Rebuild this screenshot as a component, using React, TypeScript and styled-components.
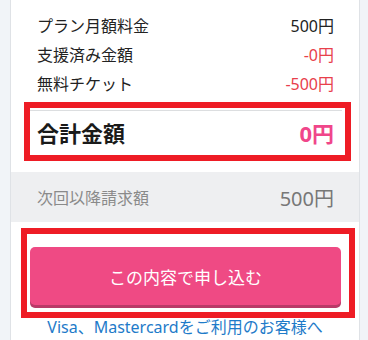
import React from 'react'
import styled, { createGlobalStyle } from 'styled-components'

const GlobalStyle = createGlobalStyle`
  html, body {
    margin: 0;
    padding: 0;
    background: #f1f4f8;
    font-family: "Noto Sans", "Noto Sans CJK JP", sans-serif;
  }
  * {
    box-sizing: border-box;
  }
`

const Page = styled.main`
  height: 340px;
  overflow: hidden;
`

const Card = styled.section`
  margin-left: 10px;
  width: 350px;
  background: #fff;
  border-left: 1px solid #dfe2e6;
  border-right: 1px solid #dfe2e6;
  padding-bottom: 20px;
`

const Breakdown = styled.div`
  padding: 10px 25px 0 26px;
`

const Row = styled.div`
  display: flex;
  justify-content: space-between;
  align-items: center;
  height: 29px;
  font-size: 16px;
  color: #222;
`

const Price = styled.span<{ $minus?: boolean }>`
  color: ${(p) => (p.$minus ? '#e8404b' : '#222')};
`

// 注目させるための赤枠
const Highlight = styled.div<{ $left: number; $width: number; $height: number; $top: number }>`
  margin-top: ${(p) => p.$top}px;
  margin-left: ${(p) => p.$left}px;
  width: ${(p) => p.$width}px;
  height: ${(p) => p.$height}px;
  border: 6px solid #ee1c25;
`

const TotalRow = styled.div`
  margin: 2px 3px 0 0;
  height: 45px;
  border-top: 1px solid #dcdee0;
  display: flex;
  justify-content: space-between;
  align-items: center;
  padding: 0 8px 2px 7px;
  font-size: 22px;
  font-weight: bold;
  color: #1a1a1a;
`

const TotalPrice = styled.span`
  color: #f0468a;
`

const NextBilling = styled.div`
  margin-top: 11px;
  height: 50px;
  background: #eeeff1;
  display: flex;
  justify-content: space-between;
  align-items: center;
  padding: 0 25px 0 26px;
  color: #8a8a8a;
  font-size: 16px;
`

const NextPrice = styled.span`
  font-size: 20px;
  color: #777;
`

const SubmitButton = styled.button`
  display: block;
  margin: 13px 0 0 3px;
  width: 311px;
  height: 58px;
  border: none;
  border-radius: 5px;
  background: #ef4a84;
  box-shadow: 0 3px 0 #b93a68;
  color: #fff;
  font-family: inherit;
  font-size: 17px;
  cursor: pointer;
`

const CardLink = styled.a`
  display: block;
  margin-top: 0;
  line-height: 18px;
  text-align: center;
  color: #1e7bc9;
  font-size: 16px;
  text-decoration: none;
`

const App = () => {
  return (
    <Page>
      <GlobalStyle />
      <Card>
        <Breakdown>
          <Row>
            <span>プラン月額料金</span>
            <Price>500円</Price>
          </Row>
          <Row>
            <span>支援済み金額</span>
            <Price $minus>-0円</Price>
          </Row>
          <Row>
            <span>無料チケット</span>
            <Price $minus>-500円</Price>
          </Row>
        </Breakdown>
        <Highlight $top={5} $left={13} $width={327} $height={59}>
          <TotalRow>
            <span>合計金額</span>
            <TotalPrice>0円</TotalPrice>
          </TotalRow>
        </Highlight>
        <NextBilling>
          <span>次回以降請求額</span>
          <NextPrice>500円</NextPrice>
        </NextBilling>
        <Highlight $top={6} $left={10} $width={334} $height={90}>
          <SubmitButton>この内容で申し込む</SubmitButton>
        </Highlight>
        <CardLink href="#">Visa、Mastercardをご利用のお客様へ</CardLink>
      </Card>
    </Page>
  )
}

export default App
